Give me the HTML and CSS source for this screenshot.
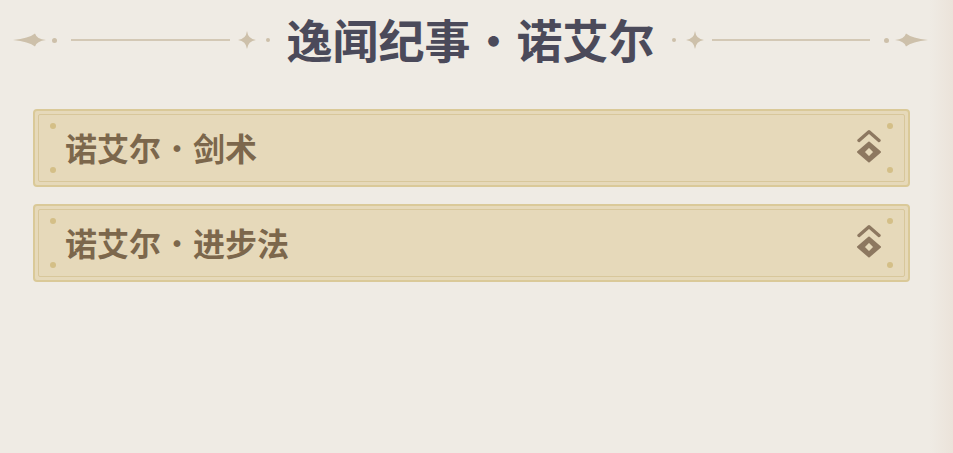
FILE: index.html
```html
<!DOCTYPE html>
<html lang="zh-CN">
<head>
    <meta charset="UTF-8">
    <meta name="viewport" content="width=device-width, initial-scale=1.0">
    <title>逸闻纪事 · 诺艾尔</title>
    <link rel="stylesheet" href="styles.css">
</head>
<body>
    <div class="page">
        <header class="header">
            <div class="ornament">
                <svg class="tail" viewBox="0 0 34 14" width="34" height="14"><path d="M0 7 Q16 5.4 22 0.5 Q23.6 6 33 7 Q23.6 8 22 13.5 Q16 8.6 0 7 Z"/></svg>
                <span class="odot"></span>
                <span class="oline"></span>
                <svg class="star" viewBox="0 0 18 18" width="18" height="18"><path d="M9 0 Q10 8 18 9 Q10 10 9 18 Q8 10 0 9 Q8 8 9 0 Z"/></svg>
                <span class="odot small"></span>
            </div>
            <h1 class="title"><span>逸闻纪事</span><span class="sep">·</span><span>诺艾尔</span></h1>
            <div class="ornament right">
                <svg class="tail" viewBox="0 0 34 14" width="34" height="14"><path d="M0 7 Q16 5.4 22 0.5 Q23.6 6 33 7 Q23.6 8 22 13.5 Q16 8.6 0 7 Z"/></svg>
                <span class="odot"></span>
                <span class="oline"></span>
                <svg class="star" viewBox="0 0 18 18" width="18" height="18"><path d="M9 0 Q10 8 18 9 Q10 10 9 18 Q8 10 0 9 Q8 8 9 0 Z"/></svg>
                <span class="odot small"></span>
            </div>
        </header>

        <div class="list">
            <div class="card">
                <span class="pin tl"></span><span class="pin bl"></span>
                <span class="pin tr"></span><span class="pin br"></span>
                <span class="label"><span>诺艾尔</span><span class="sep">·</span><span>剑术</span></span>
                <svg class="icon" viewBox="0 0 28 36" width="28" height="36">
                    <polyline points="4,10.5 14,1.8 24,10.5" fill="none" stroke-width="3.4" stroke-linejoin="round" stroke-linecap="round"/>
                    <path d="M14 12.5 L25 22 L14 31.5 L3 22 Z M14 16.5 L8.5 22 L14 27.5 L19.5 22 Z" fill-rule="evenodd" stroke-width="2" stroke-linejoin="round"/>
                </svg>
            </div>
            <div class="card">
                <span class="pin tl"></span><span class="pin bl"></span>
                <span class="pin tr"></span><span class="pin br"></span>
                <span class="label"><span>诺艾尔</span><span class="sep">·</span><span>进步法</span></span>
                <svg class="icon" viewBox="0 0 28 36" width="28" height="36">
                    <polyline points="4,10.5 14,1.8 24,10.5" fill="none" stroke-width="3.4" stroke-linejoin="round" stroke-linecap="round"/>
                    <path d="M14 12.5 L25 22 L14 31.5 L3 22 Z M14 16.5 L8.5 22 L14 27.5 L19.5 22 Z" fill-rule="evenodd" stroke-width="2" stroke-linejoin="round"/>
                </svg>
            </div>
        </div>
    </div>
</body>
</html>
```

FILE: styles.css
```css
html, body {
    margin: 0;
    height: 100%;
}
body {
    font-family: "Noto Sans CJK SC", "Noto Sans", sans-serif;
    background: linear-gradient(to right, #efebe4 0, #efebe4 930px, #ebe3da 953px);
}
.page {
    width: 953px;
}
.header {
    display: flex;
    align-items: center;
    height: 80px;
    padding: 0 25px 0 13px;
}
.ornament {
    flex: 1;
    display: flex;
    align-items: center;
}
.ornament.right {
    flex-direction: row-reverse;
}
.ornament.right .tail {
    transform: scaleX(-1);
}
.ornament svg {
    fill: #cdc0aa;
    flex: none;
}
.odot {
    width: 5px;
    height: 5px;
    border-radius: 50%;
    background: #cdc0aa;
    margin: 0 6px 0 5px;
    flex: none;
}
.ornament.right .odot {
    margin: 0 5px 0 6px;
}
.odot.small {
    width: 4px;
    height: 4px;
    margin: 0 0 0 10px;
}
.ornament.right .odot.small {
    margin: 0 10px 0 0;
}
.oline {
    flex: 1;
    height: 2px;
    background: #d3c8b5;
    margin: 0 8px;
}
.title {
    margin: 0 17px 4px;
    font-size: 46px;
    line-height: 1;
    font-weight: 700;
    color: #4b4a5a;
    white-space: nowrap;
}
.sep {
    display: inline-block;
    width: 1em;
    text-align: center;
    font-weight: 500;
}
.list {
    display: flex;
    flex-direction: column;
    gap: 17px;
    padding: 29px 43px 0 33px;
}
.card {
    position: relative;
    display: flex;
    align-items: center;
    height: 78px;
    box-sizing: border-box;
    padding: 0 25px 0 30px;
    background: #e6d9ba;
    border: 2px solid #dac998;
    border-radius: 4px;
}
.card::before {
    content: "";
    position: absolute;
    inset: 3px;
    border: 1px solid #d8c79b;
    border-radius: 2px;
    pointer-events: none;
}
.pin {
    position: absolute;
    width: 6px;
    height: 6px;
    border-radius: 50%;
    background: #d4bf87;
}
.pin.tl { left: 15px; top: 12px; }
.pin.bl { left: 15px; bottom: 12px; }
.pin.tr { right: 15px; top: 12px; }
.pin.br { right: 15px; bottom: 12px; }
.label {
    flex: 1;
    font-size: 32px;
    font-weight: 700;
    color: #7c674c;
    line-height: 1;
    padding-bottom: 3px;
    white-space: nowrap;
}
.label .sep {
    font-weight: 400;
}
.icon {
    flex: none;
    fill: #8d7860;
    stroke: #8d7860;
}
```
